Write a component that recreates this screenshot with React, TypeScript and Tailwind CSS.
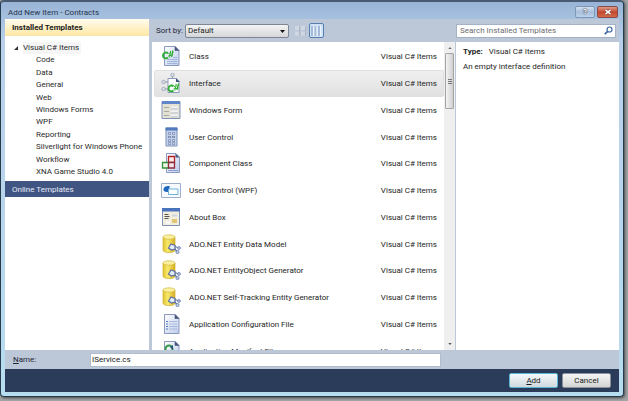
import { useState } from "react";
import type { ReactNode } from "react";

const categories = [
  "Code",
  "Data",
  "General",
  "Web",
  "Windows Forms",
  "WPF",
  "Reporting",
  "Silverlight for Windows Phone",
  "Workflow",
  "XNA Game Studio 4.0",
];

function Page({ children }: { children?: ReactNode }) {
  return (
    <>
      <path d="M3.500 .5H14l4 4v15H3.500z" fill="url(#paper)" stroke="#8b99be" />
      <path d="M14 .5v4h4z" fill="#46577f" stroke="#46577f" strokeWidth=".6" />
      {children}
    </>
  );
}

function CSharp() {
  return (
    <g fill="none" stroke="#2fae35">
      <path d="M7 7.500C5.500 5.500 2 6.500 2 9.500s3 3.500 5 2" strokeWidth="1.900" />
      <path d="M9.800 5l-1.500 6.500M12 4.500l-1.500 6.500M7.500 7.500l5-1.200M7 10l5-1.200" strokeWidth="1.200" />
    </g>
  );
}

function ClassIcon() {
  return (
    <Page>
      <path d="M6 13.500h10M6 15.500h10M6 17.500h10M12 11.500h4" stroke="#a3b4dc" />
      <CSharp />
    </Page>
  );
}

function InterfaceIcon() {
  return (
    <>
      <path d="M7 5.500h8l3 3v11H7z" fill="#fff" stroke="#8b99be" />
      <path d="M15 5v4h4z" fill="#46577f" />
      <path d="M11.500 3v3M3 9h4M3 16h4" stroke="#8f98ac" />
      <g fill="#dfe4ef" stroke="#959db1" strokeWidth=".8">
        <circle cx="11.500" cy="2" r="1.700" />
        <circle cx="2.500" cy="9" r="1.700" />
        <circle cx="2.500" cy="16" r="1.700" />
      </g>
      <g transform="translate(5.500 6)">
        <CSharp />
      </g>
    </>
  );
}

function FormIcon() {
  return (
    <>
      <path d="M1 1.500h18v17H1z" fill="#e3e1d4" stroke="#8093b4" />
      <path d="M1 1h18v3H1z" fill="#5f86ca" />
      <path d="M3 7.500h5M3 11.500h5M3 15.500h5" stroke="#a6a99f" />
      <path d="M10 7.500h7M10 11.500h7M10 15.500h7" stroke="#f2f4f7" strokeWidth="2" />
      <path d="M10 8.800h7M10 12.800h7M10 16.800h7" stroke="#9db0ce" strokeWidth=".6" />
    </>
  );
}

function ControlIcon() {
  return (
    <>
      <path d="M5 1h11v18H5z" fill="#c4d1ea" stroke="#7e92bb" />
      <path d="M4.500 .5h12V3.500h-12z" fill="#5279bd" />
      <path d="M7 6.500h7M7 10h7M7 13.500h7M7 16.500h7" stroke="#5c739f" strokeWidth="2" strokeDasharray="3 1" />
      <path d="M7.500 6.500h6M7.500 10h6M7.500 13.500h6M7.500 16.500h6" stroke="#edf2fb" strokeWidth=".8" strokeDasharray="2 2" />
    </>
  );
}

function ComponentIcon() {
  return (
    <>
      <path d="M5.500 .5H15l3.500 3.500v15.500h-13z" fill="url(#paper)" stroke="#8b99be" />
      <path d="M14.500 .5v4h4z" fill="#46577f" />
      <g strokeWidth="1.300">
        <path d="M7.500 3.500h6v6h-6z" fill="#fbe9e9" stroke="#b52529" />
        <path d="M1.500 9.500h6v5.500h-6z" fill="#ecf8e8" stroke="#2f9136" />
        <path d="M7.500 9.500h6v5.500h-6z" fill="#f4e3ea" stroke="#8b2c3c" />
      </g>
      <path d="M7 17.500h10" stroke="#8ea2cd" />
    </>
  );
}

function WpfIcon() {
  return (
    <>
      <path d="M.5 3.500h19v14H.5z" fill="#f7fbff" stroke="#9caeca" />
      <path d="M2.500 9c.5-2.500 4-3.500 6.500-2.500L8 8.500l1.500 1L7 12c-2.500.5-5-1-4.500-3z" fill="#1c66bb" />
      <path d="M7.500 9h9.500v5.500H7.500z" fill="#fff" stroke="#6bb2de" />
    </>
  );
}

function AboutIcon() {
  return (
    <>
      <path d="M1.500 1.500h17v17h-17z" fill="#f1eedd" stroke="#8093b4" />
      <path d="M1 1h18v3.500H1z" fill="#4a73be" />
      <path d="M3.500 7.500h4M3.500 9.500h5M3.500 11.500h4" stroke="#555" />
      <path d="M5 15.500h4" stroke="#fff" strokeWidth="2" />
      <path d="M11 14h5" stroke="#e3c777" strokeWidth="4" />
      <path d="M11 8.500h5" stroke="#cdd7e4" strokeWidth="2" />
    </>
  );
}

function DatabaseIcon() {
  return (
    <>
      <path d="M2 3v13c0 3.500 12 3.500 12 0V3z" fill="url(#gold)" stroke="#cdb035" strokeWidth=".7" />
      <ellipse cx="8" cy="3" rx="6" ry="2.200" fill="#faf0a0" stroke="#d4b840" strokeWidth=".7" />
      <path d="M12.500 13.500l4 4.500M14 12.500l4 1.500" stroke="#6376a5" strokeWidth="1.200" />
      <path d="M7.500 14l2.500-4 4 1.500v3.500L10.500 16z" fill="#e3eafb" stroke="#5c719f" strokeWidth="1.200" />
      <circle cx="16.500" cy="18" r="1.600" fill="#c3cfef" stroke="#6376a5" strokeWidth=".8" />
      <circle cx="18" cy="14" r="1.400" fill="#c3cfef" stroke="#6376a5" strokeWidth=".8" />
    </>
  );
}

function ConfigIcon() {
  return (
    <Page>
      <path d="M5 7.500h2M5 10h2M5 12.500h2M5 15h2" stroke="#5478b8" />
      <path d="M8 7.500h8M8 10h8M8 12.500h8M8 15h8" stroke="#a8b9dc" />
    </Page>
  );
}

function ManifestIcon() {
  return (
    <Page>
      <circle cx="8" cy="8" r="3.500" fill="none" stroke="#399847" strokeWidth="2" />
      <path d="M9 6l3-2v5z" fill="#27557b" />
    </Page>
  );
}

const templates = [
  { name: "Class", icon: <ClassIcon /> },
  { name: "Interface", icon: <InterfaceIcon /> },
  { name: "Windows Form", icon: <FormIcon /> },
  { name: "User Control", icon: <ControlIcon /> },
  { name: "Component Class", icon: <ComponentIcon /> },
  { name: "User Control (WPF)", icon: <WpfIcon /> },
  { name: "About Box", icon: <AboutIcon /> },
  { name: "ADO.NET Entity Data Model", icon: <DatabaseIcon /> },
  { name: "ADO.NET EntityObject Generator", icon: <DatabaseIcon /> },
  { name: "ADO.NET Self-Tracking Entity Generator", icon: <DatabaseIcon /> },
  { name: "Application Configuration File", icon: <ConfigIcon /> },
  { name: "Application Manifest File", icon: <ManifestIcon /> },
];

function TitleBar() {
  return (
    <header className="flex h-[17px] shrink-0 items-start justify-between pl-[7px] pr-[5px]">
      <h1 className="pt-[5px] text-[8px] leading-[12px] text-[#26364d]">Add New Item - Contracts</h1>
      <div className="flex gap-[2px] pt-[4px]">
        <button aria-label="Help" className="flex h-[12px] w-[20px] items-center justify-center rounded-[2px] border border-[#7f97b6] bg-linear-to-b from-[#d3e1f1] via-[#a9bfdb] to-[#bdd2ea] text-[8px] font-bold leading-none text-white [text-shadow:0_0_2px_#223,0_0_1px_#223]">
          ?
        </button>
        <button aria-label="Close" className="flex h-[12px] w-[21px] items-center justify-center rounded-[2px] border border-[#8a4a48] bg-linear-to-b from-[#dc9a8c] via-[#c4482d] to-[#d2684b]">
          <svg viewBox="0 0 8 6" className="h-[6px] w-[8px]">
            <path d="M1.500 .8l5 4.400M6.500 .8l-5 4.400" stroke="#5a2a28" strokeWidth="2.600" />
            <path d="M1.500 .8l5 4.400M6.500 .8l-5 4.400" stroke="#fff" strokeWidth="1.700" />
          </svg>
        </button>
      </div>
    </header>
  );
}

function Sidebar() {
  return (
    <nav className="flex w-[144px] shrink-0 flex-col bg-white">
      <h2 className="h-[17px] shrink-0 border-b border-[#f5e7b4] bg-linear-to-b from-[#fffbee] to-[#ffe9a6] pl-[7px] pt-px text-[8px] font-bold leading-[16px] text-[#1b1b1b]">
        Installed Templates
      </h2>
      <ul className="mt-[6px] flex h-[136px] shrink-0 flex-col justify-between text-[8px] leading-[12px] text-[#2a2a2a]">
        <li className="flex items-center gap-[5px] pl-[9px]">
          <svg viewBox="0 0 5 5" className="h-[4px] w-[4px]">
            <path d="M5 0v5H0z" fill="#333" />
          </svg>
          <a href="#items" className="bg-[#f5f5f5] pr-[2px]">Visual C# Items</a>
        </li>
        {categories.map((name) => (
          <li key={name} className="whitespace-nowrap pl-[31px]">
            <a href="#items">{name}</a>
          </li>
        ))}
      </ul>
      <button className="mt-[3px] h-[16px] shrink-0 bg-[#415583] pl-[7px] pt-px text-left text-[8px] leading-[15px] text-[#e6ebf5]">
        Online Templates
      </button>
    </nav>
  );
}

function Toolbar() {
  return (
    <div className="flex h-[23px] shrink-0 items-center pl-[4px]">
      <label htmlFor="sort" className="w-[29px] whitespace-nowrap pt-px text-[8px] leading-[12px] text-[#1e2635]">
        Sort by:
      </label>
      <div className="relative w-[104px]">
        <select id="sort" className="block h-[14px] w-full appearance-none rounded-[2px] border border-[#7d8594] bg-linear-to-b from-[#f4f4f4] to-[#d4d6d8] pl-[2px] text-[8px] leading-[12px] text-[#1a1a1a]">
          <option>Default</option>
        </select>
        <svg viewBox="0 0 5 3" className="pointer-events-none absolute right-[4px] top-[6px] h-[3px] w-[5px]">
          <path d="M0 0h5L2.500 3z" fill="#111" />
        </svg>
      </div>
      <button aria-label="Small icons" className="ml-[4px] flex h-[14px] w-[14px] items-center justify-center">
        <svg viewBox="0 0 11 10" className="h-[10px] w-[11px]">
          <path d="M0 0h4v4H0zM6 0h4v4H6zM0 5.500h4v4H0zM6 5.500h4v4H6z" fill="#cfd7e3" />
          <path d="M4.500 1v8M10.500 1v8" stroke="#a9b4c6" />
        </svg>
      </button>
      <button aria-label="Medium icons" className="ml-[2px] flex h-[15px] w-[15px] items-center justify-center rounded-[2px] border border-[#547fae] bg-[#d0e2f5]">
        <svg viewBox="0 0 11 10" className="h-[10px] w-[11px]">
          <path d="M1 0v10M4.500 0v10M8 0v10" stroke="#a3b9d8" strokeWidth="2" />
          <path d="M2.500 0v10M6 0v10M9.500 0v10" stroke="#eef5fc" />
        </svg>
      </button>
    </div>
  );
}

export default function App() {
  const [selected, setSelected] = useState("Interface");

  return (
    <main className="h-screen overflow-hidden bg-[#a3a5a6] pb-[4px] pr-[4px] font-[Roboto,sans-serif]">
      <svg className="absolute h-0 w-0" aria-hidden="true">
        <defs>
          <linearGradient id="paper" x2="1" y2="1">
            <stop stopColor="#fff" />
            <stop offset="1" stopColor="#bccbea" />
          </linearGradient>
          <linearGradient id="gold">
            <stop stopColor="#e3c42e" />
            <stop offset=".4" stopColor="#f8e96e" />
            <stop offset="1" stopColor="#d6ae1e" />
          </linearGradient>
        </defs>
      </svg>
      <div className="flex h-full flex-col rounded-[4px] border border-t-2 border-[#243c4c] border-t-[#4a5a70] bg-linear-to-b from-[#98b4d6] via-[#bad0ea] via-10% to-[#b8dcf0] shadow-[1px_1px_3px_#444]">
        <TitleBar />
        <div className="mx-[4px] mb-[4px] flex min-h-0 flex-1 flex-col bg-[#bcc7d8]">
          <div className="flex min-h-0 flex-1">
            <Sidebar />
            <div className="ml-[3px] flex min-w-0 flex-1 flex-col">
              <Toolbar />
              <section className="flex min-h-0 flex-1 overflow-hidden bg-white">
                <ul className="mt-[1px] grid h-[321px] min-w-0 flex-1 auto-rows-fr pl-[2px]">
                  {templates.map((t) => (
                    <li key={t.name} className="min-h-0">
                      <button
                        onClick={() => setSelected(t.name)}
                        className={
                          t.name === selected
                            ? "flex h-full w-full items-center rounded-[2px] border border-[#e0e0e0] bg-linear-to-b from-[#efefef] to-[#e1e1e1] pl-[6px] pr-[6px] text-left text-[8px] leading-[12px] text-[#1e1e1e]"
                            : "flex h-full w-full items-center border border-transparent pl-[6px] pr-[6px] text-left text-[8px] leading-[12px] text-[#1e1e1e]"
                        }
                      >
                        <svg viewBox="0 0 20 20" className="h-[20px] w-[20px] shrink-0" fill="none">
                          {t.icon}
                        </svg>
                        <span className="ml-[8px] flex-1 whitespace-nowrap pt-[2px]">{t.name}</span>
                        <span className="whitespace-nowrap pt-[2px]">Visual C# Items</span>
                      </button>
                    </li>
                  ))}
                </ul>
                <div className="flex w-[11px] shrink-0 flex-col items-center bg-[#efefef]">
                  <button aria-label="Scroll up" className="flex h-[11px] w-full items-center justify-center">
                    <svg viewBox="0 0 5 3" className="h-[2px] w-[4px]">
                      <path d="M0 3h5L2.500 0z" fill="#666" />
                    </svg>
                  </button>
                  <div className="flex h-[56px] w-[9px] flex-col items-center justify-center gap-[1px] rounded-[1px] border border-[#a5a5a5] bg-linear-to-r from-[#f4f4f4] to-[#cfcfd1]">
                    <i className="h-px w-[4px] bg-[#777]" />
                    <i className="h-px w-[4px] bg-[#777]" />
                    <i className="h-px w-[4px] bg-[#777]" />
                  </div>
                  <div className="flex-1" />
                  <button aria-label="Scroll down" className="flex h-[13px] w-full items-center justify-center">
                    <svg viewBox="0 0 5 3" className="h-[2px] w-[4px]">
                      <path d="M0 0h5L2.500 3z" fill="#555" />
                    </svg>
                  </button>
                </div>
              </section>
            </div>
            <aside className="flex w-[164px] shrink-0 flex-col">
              <div className="flex h-[23px] items-center pl-[1px] pr-[3px]">
                <div className="flex h-[14px] w-full items-center border border-[#a5b1c5] bg-white pr-[2px]">
                  <input
                    aria-label="Search Installed Templates"
                    placeholder="Search Installed Templates"
                    className="min-w-0 flex-1 pl-[3px] pt-px text-[8px] leading-[12px] outline-none placeholder:text-[#6d6d6d]"
                  />
                  <svg viewBox="0 0 9 9" className="h-[9px] w-[9px]" fill="none" stroke="#3a67a5">
                    <circle cx="5.500" cy="3.500" r="2.500" strokeWidth="1.200" />
                    <path d="M3.700 5.300L.8 8.200" strokeWidth="1.700" />
                  </svg>
                </div>
              </div>
              <div className="flex-1 border-l border-[#bcc7d8] bg-white pl-[7px] pt-[4px] text-[8px] leading-[12px] text-[#1e1e1e]">
                <p>
                  <b className="mr-[6px]">Type:</b>Visual C# Items
                </p>
                <p className="mt-[3px]">An empty interface definition</p>
              </div>
            </aside>
          </div>
          <div className="flex h-[19px] shrink-0 items-center pl-[8px]">
            <label htmlFor="name" className="w-[77px] text-[8px] leading-[12px] text-[#1e2635]">
              <u>N</u>ame:
            </label>
            <input
              id="name"
              defaultValue="IService.cs"
              className="mr-[178px] h-[14px] min-w-0 flex-1 border border-[#b1bccd] bg-white pl-[1px] text-[8px] leading-[12px] text-[#1a1a1a] outline-none"
            />
          </div>
          <footer className="flex h-[23px] shrink-0 items-center justify-end gap-[4px] bg-[#2b3b5a] pr-[8px]">
            <button className="h-[15px] w-[49px] rounded-[2px] border border-[#58b6d4] bg-linear-to-b from-[#f4f8fa] to-[#d0d9de] text-[8px] leading-[12px] text-[#1a1a1a]">
              <u>A</u>dd
            </button>
            <button className="h-[15px] w-[49px] rounded-[2px] border border-[#8b929e] bg-linear-to-b from-[#f5f5f5] to-[#d4d4d4] text-[8px] leading-[12px] text-[#1a1a1a]">
              Cancel
            </button>
          </footer>
        </div>
      </div>
    </main>
  );
}
